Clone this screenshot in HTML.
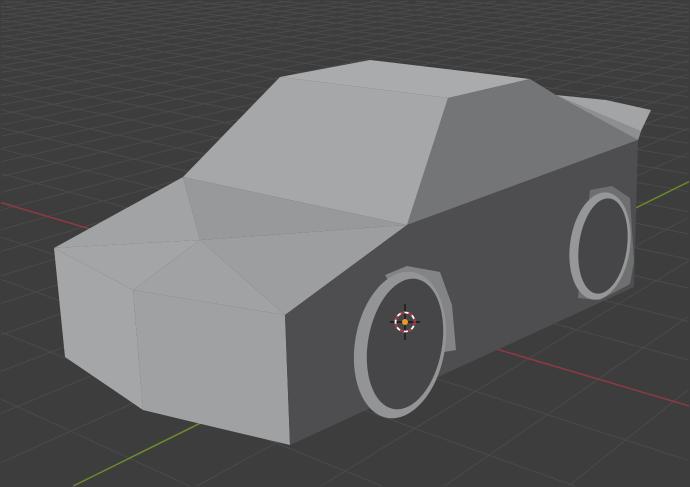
<!DOCTYPE html>
<html><head><meta charset="utf-8"><style>html,body{margin:0;padding:0;background:#3d3d3d;overflow:hidden;width:690px;height:487px}svg{display:block;overflow:hidden}</style></head>
<body>
<svg id="s" width="690" height="487" viewBox="0 0 690 487" xmlns="http://www.w3.org/2000/svg">
<rect width="690" height="487" fill="#3d3d3d"/>
<g id="grid" stroke="#4a4a4a" stroke-width="1" fill="none"></g>
<g id="axes" stroke-width="1.5" fill="none"></g>
<g stroke="none">
<polygon points="556,95 606,100 651,110 641,131 638,140" fill="#a3a4a5"/>
<polygon points="556,95 641,131 638,140" fill="#8e8f90"/>
<polygon points="280,77 370,60 530,79 448,98" fill="#a9abad"/>
<polygon points="448,98 530,79 556,95 638,140 407,225" fill="#747576"/>
<polygon points="280,77 448,98 407,225 183,177" fill="#a5a7a9"/>
<polygon points="183,177 407,225 200,240" fill="#97999b"/>
<polygon points="54,248 183,177 200,240" fill="#a1a3a5"/>
<polygon points="54,248 200,240 133,290" fill="#a3a5a7"/>
<polygon points="133,290 200,240 285,315" fill="#a0a2a4"/>
<polygon points="200,240 407,225 285,315" fill="#9c9ea0"/>
<polygon points="54,248 133,290 143,410 65,357" fill="#a4a6a8"/>
<polygon points="133,290 285,315 290,445 197,423 143,410" fill="#9fa1a3"/>
<polygon points="285,315 407,225 638,140 634,287 290,445" fill="#4e4d4f"/>
<polygon points="590,190 612,186 630,198 634,262 630,284 600,300 578,298" fill="#6e6f70"/>
<ellipse cx="600" cy="246" rx="30" ry="54" fill="#969798" transform="rotate(8 600 246)"/>
<ellipse cx="603" cy="246" rx="24" ry="48" fill="#464547" transform="rotate(8 603 246)"/>
<polygon points="385,275 407,266 440,272 452,305 456,350 444,352 400,300" fill="#838485"/>
<ellipse cx="400" cy="345" rx="45" ry="74" fill="#939495" transform="rotate(10 400 345)"/>
<ellipse cx="405" cy="344" rx="37" ry="66" fill="#464547" transform="rotate(10 405 344)"/>
</g>
<g>
<line x1="405" y1="304" x2="405" y2="340" stroke="#111" stroke-width="1.2"/>
<line x1="390" y1="322" x2="420" y2="322" stroke="#111" stroke-width="1.2"/>
<circle cx="405" cy="322" r="9.5" fill="none" stroke="#fff" stroke-width="1.8"/>
<circle cx="405" cy="322" r="9.5" fill="none" stroke="#b0283a" stroke-width="1.8" stroke-dasharray="4 4"/>
<circle cx="405" cy="322" r="3" fill="#f0962a"/>
</g>
</svg>
<script>
(function(){
var O=[405,322],VR=[-1192,-150],VG=[1360,-150],a=0.036,b=0.056;
function P(u,v){var s=a*u,t=b*v,d=1+s+t;return [(O[0]+s*VR[0]+t*VG[0])/d,(O[1]+s*VR[1]+t*VG[1])/d];}
var ns="http://www.w3.org/2000/svg",g=document.getElementById("grid"),ax=document.getElementById("axes");
var W=689,H=486;
function clip(p,q){var x0=p[0],y0=p[1],dx=q[0]-x0,dy=q[1]-y0,t0=0,t1=1;
var P_=[-dx,dx,-dy,dy],Q=[x0-1,W-x0,y0-1,H-y0];
for(var i=0;i<4;i++){if(P_[i]===0){if(Q[i]<0)return null;}else{var r=Q[i]/P_[i];if(P_[i]<0){if(r>t1)return null;if(r>t0)t0=r;}else{if(r<t0)return null;if(r<t1)t1=r;}}}
return [[x0+t0*dx,y0+t0*dy],[x0+t1*dx,y0+t1*dy]];}
function line(p,q,el,col){var c=clip(p,q);if(!c)return;var l=document.createElementNS(ns,"line");l.setAttribute("x1",c[0][0]);l.setAttribute("y1",c[0][1]);l.setAttribute("x2",c[1][0]);l.setAttribute("y2",c[1][1]);if(col)l.setAttribute("stroke",col);el.appendChild(l);}
var M=80;
for(var u=-M;u<=M;u++){var vmin=(0.01-1-a*u)/b;if(vmin>M)continue;vmin=Math.max(vmin,-M);line(P(u,vmin),P(u,M),g);}
for(var v=-M;v<=M;v++){var umin=(0.01-1-b*v)/a;if(umin>M)continue;umin=Math.max(umin,-M);line(P(umin,v),P(M,v),g);}
line(P((0.01-1)/a,0),P(M,0),ax,"#8e3a42");
line(P(0,(0.01-1)/b),P(0,M),ax,"#6a8c2c");
})();
</script>
</body></html>
